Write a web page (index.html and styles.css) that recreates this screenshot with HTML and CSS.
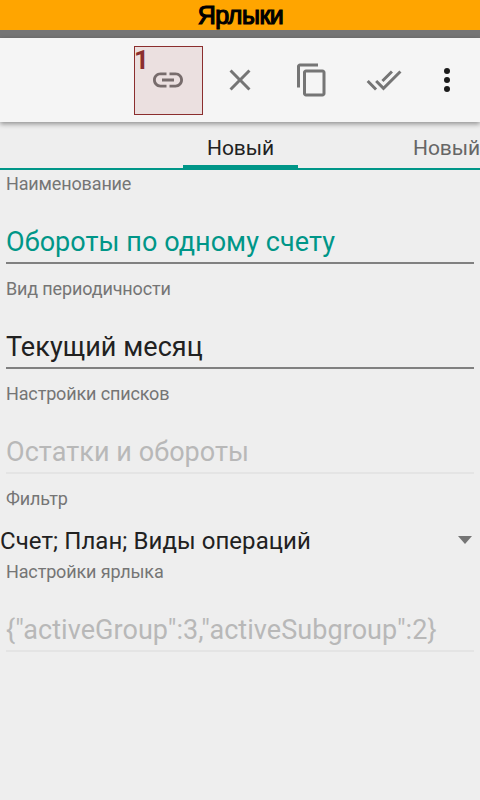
FILE: index.html
```html
<!DOCTYPE html>
<html lang="ru">
<head>
<meta charset="utf-8">
<title>Ярлыки</title>
<link rel="stylesheet" href="styles.css">
</head>
<body>
<header class="title"><span>Ярлыки</span></header>
<div class="status"></div>
<div class="toolbar">
  <button class="tool marked" aria-label="Ссылка"><span class="mark">1</span>
    <svg viewBox="0 0 24 24"><path d="M3.9 12c0-1.71 1.39-3.1 3.1-3.1h4V7H7c-2.76 0-5 2.24-5 5s2.24 5 5 5h4v-1.900H7c-1.710 0-3.100-1.390-3.100-3.100zM8 13h8v-2H8v2zm9-6h-4v1.900h4c1.710 0 3.100 1.390 3.100 3.100s-1.390 3.100-3.100 3.100h-4V17h4c2.760 0 5-2.240 5-5s-2.240-5-5-5z"/></svg>
  </button>
  <button class="tool" aria-label="Закрыть">
    <svg viewBox="0 0 24 24"><path d="M19 6.410L17.590 5 12 10.590 6.410 5 5 6.410 10.590 12 5 17.590 6.410 19 12 13.410 17.590 19 19 17.590 13.410 12z"/></svg>
  </button>
  <button class="tool" aria-label="Копировать">
    <svg viewBox="0 0 24 24"><path d="M16 1H4c-1.100 0-2 .9-2 2v14h2V3h12V1zm3 4H8c-1.100 0-2 .9-2 2v14c0 1.100.9 2 2 2h11c1.100 0 2-.9 2-2V7c0-1.100-.9-2-2-2zm0 16H8V7h11v14z"/></svg>
  </button>
  <button class="tool" aria-label="Отметить все">
    <svg viewBox="0 0 24 24"><path d="M18 7l-1.410-1.410-6.340 6.340 1.410 1.410L18 7zm4.240-1.410L11.660 16.170 7.480 12l-1.410 1.410L11.660 19l12-12-1.420-1.410zM.410 13.410L6 19l1.410-1.410L1.830 12 .410 13.410z"/></svg>
  </button>
  <button class="tool more" aria-label="Ещё">
    <svg viewBox="0 0 24 24"><circle cx="12" cy="6" r="2"/><circle cx="12" cy="12" r="2"/><circle cx="12" cy="18" r="2"/></svg>
  </button>
</div>
<nav class="tabs">
  <div class="tab active">Новый</div>
  <div class="tab">Новый</div>
</nav>
<main>
  <section class="field">
    <div class="label">Наименование</div>
    <div class="value accent">Обороты по одному счету</div>
  </section>
  <section class="field">
    <div class="label">Вид периодичности</div>
    <div class="value">Текущий месяц</div>
  </section>
  <section class="field">
    <div class="label">Настройки списков</div>
    <div class="value disabled">Остатки и обороты</div>
  </section>
  <section class="field filter">
    <div class="label">Фильтр</div>
    <div class="select"><span>Счет; План; Виды операций</span><i class="arrow"></i></div>
  </section>
  <section class="field">
    <div class="label">Настройки ярлыка</div>
    <div class="value disabled">{"activeGroup":3,"activeSubgroup":2}</div>
  </section>
</main>
</body>
</html>
```
FILE: styles.css
```css
* { box-sizing: border-box; }
body {
  margin: 0;
  height: 800px;
  overflow: hidden;
  background: #eee;
  color: #212121;
  font-family: Roboto, sans-serif;
}
.title {
  height: 30px;
  padding-left: 1px;
  background: #ffa500;
  color: #000;
  font: 25px/31px "Liberation Sans", sans-serif;
  letter-spacing: -.5px;
  text-align: center;
  -webkit-text-stroke: 1.2px #000;
}
.status { height: 8px; background: #757575; }
.toolbar {
  position: relative;
  display: flex;
  align-items: center;
  height: 84px;
  padding-left: 132px;
  background: #f5f5f5;
  box-shadow: 0 2px 5px rgba(0, 0, 0, .4);
}
.tool {
  position: relative;
  display: flex;
  align-items: center;
  justify-content: center;
  flex: none;
  width: 72px;
  height: 72px;
  padding: 0;
  border: 0;
  background: none;
}
.tool svg { width: 36px; height: 36px; fill: #757575; }
.marked {
  width: 69px;
  height: 69px;
  margin: 0 1px 0 2px;
  padding-right: 1px;
  border: 1px solid #8b2e2e;
  background: #ebe0e0;
}
.marked svg { fill: #776c6c; }
.mark {
  position: absolute;
  left: -1px;
  top: 0;
  color: #8b2e2e;
  font: bold 26px/26px Roboto, sans-serif;
}
.more { width: 54px; }
.more svg { fill: #1b1b1b; }
.tabs {
  display: flex;
  justify-content: space-between;
  height: 48px;
  padding-left: 183px;
  border-bottom: 2px solid #009688;
}
.tab {
  height: 48px;
  color: #666;
  font-size: 21px;
  line-height: 53px;
  letter-spacing: -.1px;
}
.tab.active {
  width: 115px;
  border-bottom: 5px solid #009688;
  color: #212121;
  text-align: center;
}
.field { height: 105px; padding: 0 6px; }
.label {
  height: 46px;
  color: #757575;
  font-size: 18px;
  line-height: 27px;
  letter-spacing: -.14px;
}
.value {
  height: 48px;
  border-bottom: 2px solid #808080;
  font-size: 27px;
  line-height: 53px;
  letter-spacing: .06px;
  white-space: nowrap;
}
.accent { color: #009688; }
.disabled { border-color: #e4e4e4; color: #b8b8b8; }
.filter { height: 73px; padding: 0; }
.filter .label { height: 37px; padding-left: 6px; }
.select {
  display: flex;
  justify-content: space-between;
  align-items: center;
  height: 36px;
  padding-right: 8px;
  font-size: 24px;
  line-height: 36px;
  letter-spacing: .06px;
}
.select span { padding-top: 2px; }
.arrow {
  border: 7px solid transparent;
  border-top: 8px solid #757575;
  border-bottom: 0;
}
```
